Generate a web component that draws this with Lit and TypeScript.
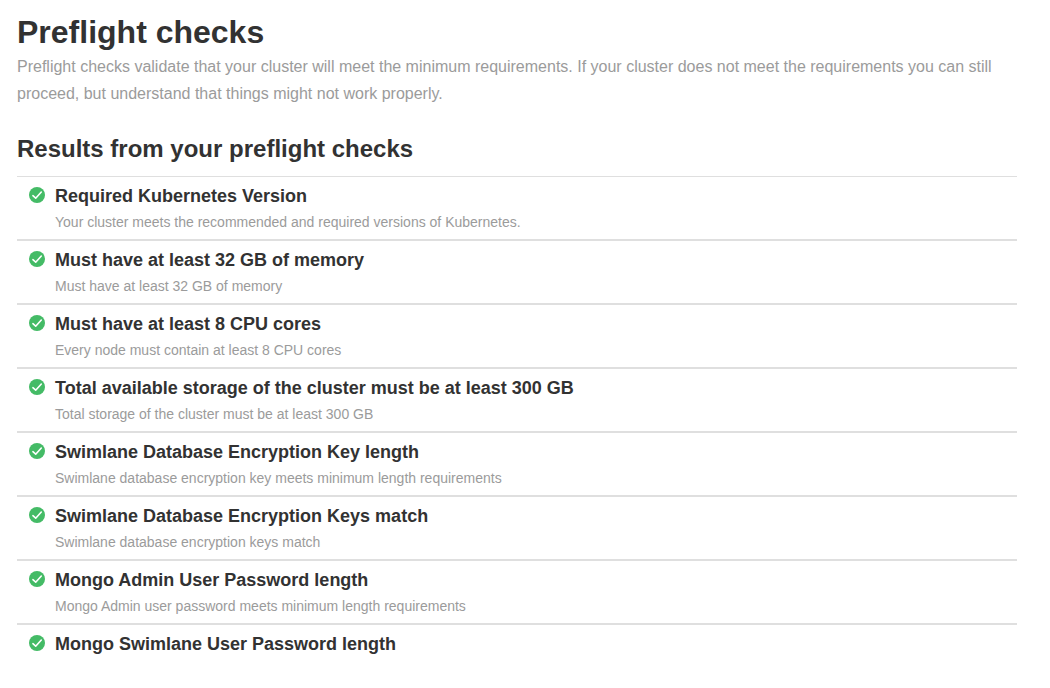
import { LitElement, html, css } from "lit";
import { customElement } from "lit/decorators.js";

interface Check {
  title: string;
  message: string;
}

const checks: Check[] = [
  { title: "Required Kubernetes Version", message: "Your cluster meets the recommended and required versions of Kubernetes." },
  { title: "Must have at least 32 GB of memory", message: "Must have at least 32 GB of memory" },
  { title: "Must have at least 8 CPU cores", message: "Every node must contain at least 8 CPU cores" },
  { title: "Total available storage of the cluster must be at least 300 GB", message: "Total storage of the cluster must be at least 300 GB" },
  { title: "Swimlane Database Encryption Key length", message: "Swimlane database encryption key meets minimum length requirements" },
  { title: "Swimlane Database Encryption Keys match", message: "Swimlane database encryption keys match" },
  { title: "Mongo Admin User Password length", message: "Mongo Admin user password meets minimum length requirements" },
  { title: "Mongo Swimlane User Password length", message: "" },
];

@customElement("app-root")
export class AppRoot extends LitElement {
  static styles = css`
    :host {
      display: block;
      min-height: 100vh;
      box-sizing: border-box;
      padding: 16px 33px 16px 17px;
      background: #ffffff;
      color: #323232;
      font-family: "Liberation Sans", Arial, Helvetica, sans-serif;
    }
    h1, h2, h3, p, ul { margin: 0; padding: 0; }
    h1 { font-size: 32px; line-height: 32px; }
    .intro { margin-top: 5px; font-size: 16px; line-height: 27px; color: #9b9b9b; }
    h2 { margin-top: 28px; font-size: 24px; line-height: 28px; }
    .list { margin-top: 13px; list-style: none; border-top: 1px solid #dfdfdf; }
    .row { display: flex; gap: 10px; padding: 8px 12px 7px; border-bottom: 2px solid #dfdfdf; }
    .row:last-child { border-bottom: 0; }
    .icon { flex: none; width: 16px; height: 16px; margin-top: 2px; }
    h3 { font-size: 18px; line-height: 22px; }
    .message { margin-top: 5px; font-size: 14px; line-height: 20px; color: #9b9b9b; }
  `;

  render() {
    return html`
      <main>
        <h1>Preflight checks</h1>
        <p class="intro">
          Preflight checks validate that your cluster will meet the minimum requirements. If your cluster does not meet
          the requirements you can still proceed, but understand that things might not work properly.
        </p>
        <h2>Results from your preflight checks</h2>
        <ul class="list">
          ${checks.map(
            (check) => html`
              <li class="row">
                <svg class="icon" viewBox="0 0 16 16" role="img" aria-label="Passed">
                  <circle cx="8" cy="8" r="8" fill="#44bb66" />
                  <path d="M3.9 8.7 6.7 11.2 12.3 5" fill="none" stroke="#ffffff" stroke-width="1.6" stroke-linecap="round" stroke-linejoin="round" />
                </svg>
                <div>
                  <h3>${check.title}</h3>
                  ${check.message ? html`<p class="message">${check.message}</p>` : null}
                </div>
              </li>
            `,
          )}
        </ul>
      </main>
    `;
  }
}
